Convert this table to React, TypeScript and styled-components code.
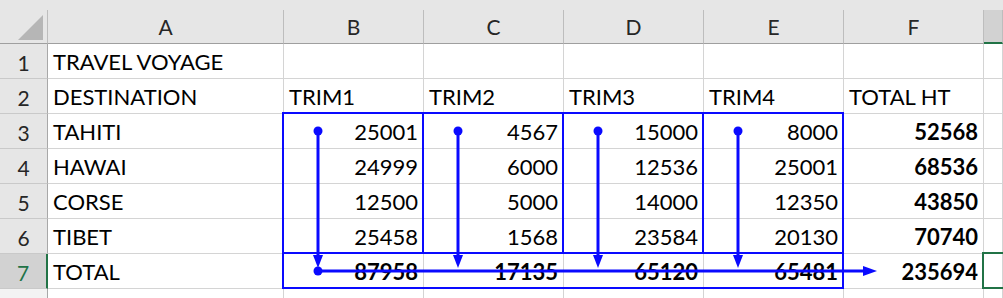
import React from "react";
import styled, { createGlobalStyle } from "styled-components";

const GlobalStyle = createGlobalStyle`
  html, body {
    margin: 0;
    padding: 0;
    background: #ffffff;
    overflow: hidden;
  }
  body {
    font-family: Lato, "Liberation Sans", Arial, sans-serif;
  }
`;

const EXCEL_GREEN = "#217346";
const BLUE = "#0a0aff";

type CellValue = string | number | null;

interface SheetRow {
  label: CellValue;
  values: CellValue[];
  total?: CellValue;
  boldValues?: boolean;
}

const columns = ["A", "B", "C", "D", "E", "F", "G"];

const rows: SheetRow[] = [
  { label: "TRAVEL VOYAGE", values: [null, null, null, null] },
  { label: "DESTINATION", values: ["TRIM1", "TRIM2", "TRIM3", "TRIM4"], total: "TOTAL HT" },
  { label: "TAHITI", values: [25001, 4567, 15000, 8000], total: 52568 },
  { label: "HAWAI", values: [24999, 6000, 12536, 25001], total: 68536 },
  { label: "CORSE", values: [12500, 5000, 14000, 12350], total: 43850 },
  { label: "TIBET", values: [25458, 1568, 23584, 20130], total: 70740 },
  { label: "TOTAL", values: [87958, 17135, 65120, 65481], total: 235694, boldValues: true },
];

const SELECTED_ROW = 7;
const SELECTED_COL = "G";

const Sheet = styled.div`
  position: relative;
  width: 1003px;
  height: 298px;
  overflow: hidden;
`;

const Grid = styled.div`
  display: grid;
  grid-template-columns: 48px 236px repeat(5, 140px) 1fr;
  grid-template-rows: 44px repeat(7, 35px) 1fr;
  width: 100%;
  height: 100%;
`;

const HeaderSlot = styled.div`
  background: #e6e6e6;
  padding-top: 10px;
  box-sizing: border-box;
  display: flex;
`;

const CornerBox = styled.div`
  flex: 1;
  position: relative;
  border-right: 1px solid #bdbdbd;
  border-bottom: 1px solid #9f9f9f;
`;

const CornerTriangle = styled.div`
  position: absolute;
  right: 4px;
  bottom: 3px;
  width: 0;
  height: 0;
  border-left: 25px solid transparent;
  border-bottom: 25px solid #b6b6b6;
`;

const ColLabel = styled.div<{ $selected?: boolean }>`
  flex: 1;
  display: flex;
  align-items: center;
  justify-content: center;
  box-sizing: border-box;
  font-size: 21px;
  line-height: 33px;
  color: #262626;
  background: ${(p) => (p.$selected ? "#d2d2d2" : "#e6e6e6")};
  border-right: 1px solid #bdbdbd;
  border-bottom: ${(p) => (p.$selected ? `2px solid ${EXCEL_GREEN}` : "1px solid #9f9f9f")};
`;

const RowHeader = styled.div<{ $selected?: boolean; $open?: boolean }>`
  display: flex;
  align-items: center;
  justify-content: center;
  box-sizing: border-box;
  padding-top: 2px;
  font-size: 21px;
  color: ${(p) => (p.$selected ? EXCEL_GREEN : "#262626")};
  background: ${(p) => (p.$selected ? "#d2d2d2" : p.$open ? "#f3f3f3" : "#e6e6e6")};
  border-bottom: ${(p) => (p.$open ? "none" : "1px solid #c9c9c9")};
  border-right: ${(p) => (p.$selected ? `2px solid ${EXCEL_GREEN}` : "1px solid #a8a8a8")};
`;

const Cell = styled.div<{ $align?: "left" | "right"; $bold?: boolean; $open?: boolean }>`
  display: flex;
  align-items: center;
  justify-content: ${(p) => (p.$align === "right" ? "flex-end" : "flex-start")};
  box-sizing: border-box;
  padding: 1px 5px 0 5px;
  font-size: 22px;
  font-weight: ${(p) => (p.$bold ? 700 : 400)};
  color: #000000;
  white-space: nowrap;
  overflow: visible;
  border-right: 1px solid #d4d4d4;
  border-bottom: ${(p) => (p.$open ? "none" : "1px solid #d4d4d4")};
`;

const Overlay = styled.svg`
  position: absolute;
  top: 0;
  left: 0;
  pointer-events: none;
`;

const valueCell = (v: CellValue, key: string, bold = false) => {
  const numeric = typeof v === "number";
  return (
    <Cell key={key} $align={numeric ? "right" : "left"} $bold={numeric && bold}>
      {v ?? ""}
    </Cell>
  );
};

// columns B..E and the arrow x for each one
const colLeft = [283, 423, 563, 703];
const arrowX = colLeft.map((x) => x + 35);

const Annotations: React.FC = () => (
  <Overlay width={1003} height={298} viewBox="0 0 1003 298">
    {colLeft.map((x) => (
      <rect key={`box-${x}`} x={x} y={113} width={140} height={140} fill="none" stroke={BLUE} strokeWidth={2} />
    ))}
    <rect x={283} y={253} width={560} height={35} fill="none" stroke={BLUE} strokeWidth={2} />

    {arrowX.map((x) => (
      <g key={`arrow-${x}`} fill={BLUE}>
        <circle cx={x} cy={131} r={4.5} />
        <line x1={x} y1={131} x2={x} y2={258} stroke={BLUE} strokeWidth={3} />
        <polygon points={`${x - 5},255 ${x + 5},255 ${x},268`} />
      </g>
    ))}

    <g fill={BLUE}>
      <circle cx={318} cy={271} r={4.5} />
      <line x1={318} y1={271} x2={866} y2={271} stroke={BLUE} strokeWidth={3} />
      <polygon points="863,266 863,276 877,271" />
    </g>

    {/* active cell G7 */}
    <rect x={983} y={253} width={40} height={35} fill="none" stroke={EXCEL_GREEN} strokeWidth={2} />
  </Overlay>
);

const App: React.FC = () => {
  return (
    <>
      <GlobalStyle />
      <Sheet>
        <Grid>
          <HeaderSlot>
            <CornerBox>
              <CornerTriangle />
            </CornerBox>
          </HeaderSlot>
          {columns.map((c) => (
            <HeaderSlot key={c}>
              {/* G is cut off at the window edge, so its letter stays hidden */}
              <ColLabel $selected={c === SELECTED_COL}>{c === SELECTED_COL ? "" : c}</ColLabel>
            </HeaderSlot>
          ))}

          {rows.map((row, i) => {
            const n = i + 1;
            return (
              <React.Fragment key={n}>
                <RowHeader $selected={n === SELECTED_ROW}>{n}</RowHeader>
                {valueCell(row.label, `${n}-a`)}
                {row.values.map((v, j) => valueCell(v, `${n}-${j}`, row.boldValues))}
                {valueCell(row.total ?? null, `${n}-f`, true)}
                <Cell />
              </React.Fragment>
            );
          })}

          <RowHeader $open />
          {columns.map((c) => (
            <Cell key={`8-${c}`} $open />
          ))}
        </Grid>
        <Annotations />
      </Sheet>
    </>
  );
};

export default App;
